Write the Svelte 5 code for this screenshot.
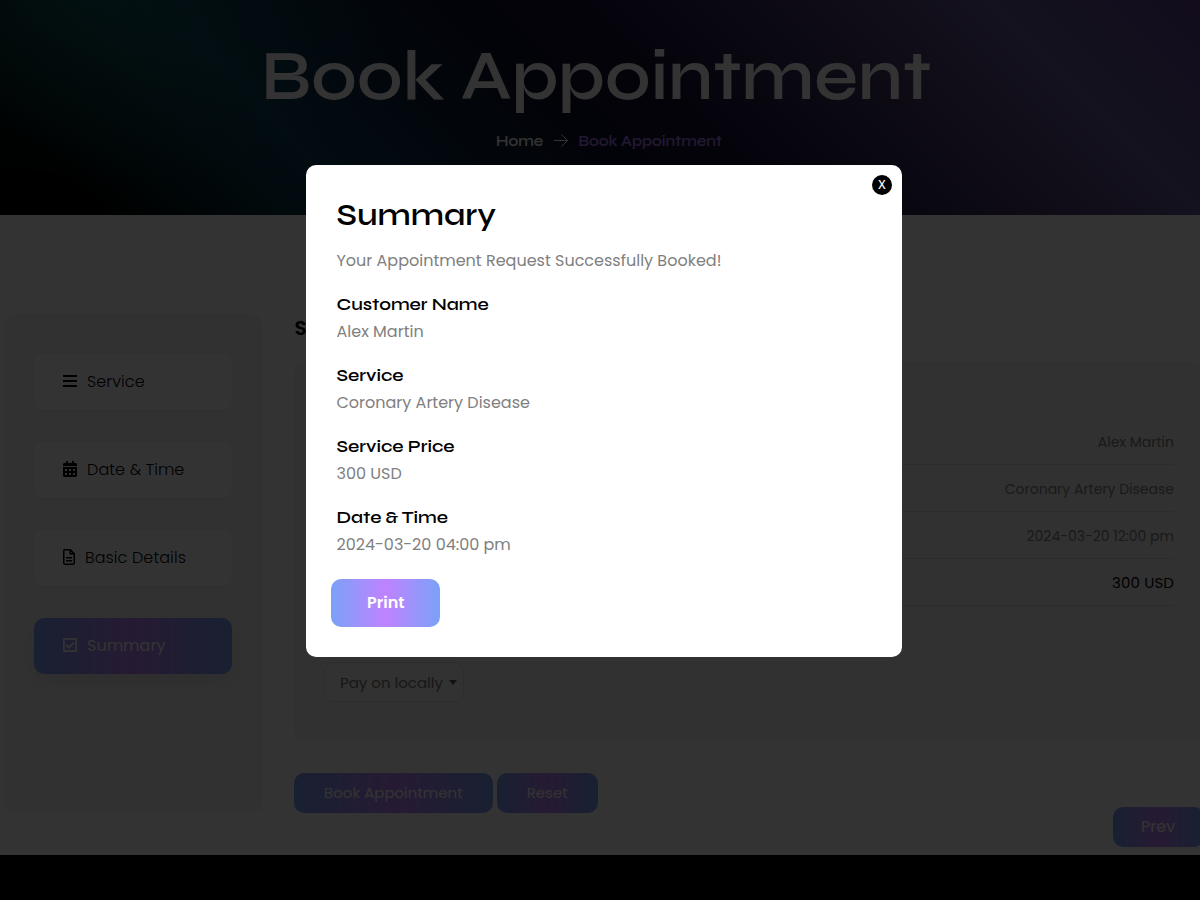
<script>
  const steps = [
    { label: 'Service', icon: 'bars' },
    { label: 'Date & Time', icon: 'calendar' },
    { label: 'Basic Details', icon: 'file' },
    { label: 'Summary', icon: 'check', active: true }
  ];
  const rows = [
    { value: 'Alex Martin' },
    { value: 'Coronary Artery Disease' },
    { value: '2024-03-20 12:00 pm' },
    { value: '300 USD', strong: true }
  ];
  const details = [
    { title: 'Customer Name', value: 'Alex Martin' },
    { title: 'Service', value: 'Coronary Artery Disease' },
    { title: 'Service Price', value: '300 USD' },
    { title: 'Date & Time', value: '2024-03-20 04:00 pm' }
  ];
</script>

<div class="page">
  <header class="hero">
    <h1>Book Appointment</h1>
    <nav class="crumbs">
      <span>Home</span>
      <svg width="14" height="14" viewBox="0 0 14 14" fill="none" stroke="currentColor" stroke-width="1"><path d="M0 6.500h13.300M7.500.500l6 6-6 6" /></svg>
      <span class="current">Book Appointment</span>
    </nav>
  </header>

  <main class="booking">
    <aside class="steps">
      {#each steps as s}
        <div class="step" class:active={s.active}>
          {#if s.icon === 'bars'}
            <svg width="14" height="16" viewBox="0 0 14 16" fill="currentColor"><path d="M0 2h14v2H0zM0 7h14v2H0zM0 12h14v2H0z" /></svg>
          {:else if s.icon === 'calendar'}
            <svg width="14" height="16" viewBox="0 0 448 512" fill="currentColor"><path fill-rule="evenodd" d="M0 464c0 26.500 21.500 48 48 48h352c26.500 0 48-21.500 48-48V192H0zM320 268c0-6.600 5.400-12 12-12h40c6.600 0 12 5.400 12 12v40c0 6.600-5.400 12-12 12h-40c-6.600 0-12-5.400-12-12zm0 128c0-6.600 5.400-12 12-12h40c6.600 0 12 5.400 12 12v40c0 6.600-5.400 12-12 12h-40c-6.600 0-12-5.400-12-12zM192 268c0-6.600 5.400-12 12-12h40c6.600 0 12 5.400 12 12v40c0 6.600-5.400 12-12 12h-40c-6.600 0-12-5.400-12-12zm0 128c0-6.600 5.400-12 12-12h40c6.600 0 12 5.400 12 12v40c0 6.600-5.400 12-12 12h-40c-6.600 0-12-5.400-12-12zM64 268c0-6.600 5.400-12 12-12h40c6.600 0 12 5.400 12 12v40c0 6.600-5.400 12-12 12H76c-6.600 0-12-5.400-12-12zm0 128c0-6.600 5.400-12 12-12h40c6.600 0 12 5.400 12 12v40c0 6.600-5.400 12-12 12H76c-6.600 0-12-5.400-12-12zM400 64h-48V16c0-8.800-7.200-16-16-16h-32c-8.800 0-16 7.200-16 16v48H160V16c0-8.800-7.200-16-16-16h-32c-8.800 0-16 7.200-16 16v48H48C21.500 64 0 85.500 0 112v48h448v-48c0-26.500-21.500-48-48-48z" /></svg>
          {:else if s.icon === 'file'}
            <svg width="12" height="16" viewBox="0 0 12 16" fill="none" stroke="currentColor" stroke-width="1.500"><path d="M2 .75h5.300l3.950 3.950V14q0 1.250-1.250 1.250H2Q.75 15.250.75 14V2Q.75.75 2 .75zM7.250.75v4h4M3 8.700h6M3 11.700h6" /></svg>
          {:else}
            <svg width="14" height="16" viewBox="0 0 14 16" fill="none" stroke="currentColor" stroke-width="1.700"><rect x=".85" y="1.850" width="12.300" height="12.300" rx=".7" /><path stroke-width="2" d="M3.200 7.900l2.700 2.700 5-5" /></svg>
          {/if}
          <span>{s.label}</span>
        </div>
      {/each}
    </aside>

    <section class="content">
      <h2>Summary</h2>
      <div class="card">
        {#each rows as r}
          <div class="row" class:strong={r.strong}>{r.value}</div>
        {/each}
        <div class="select">
          <span>Pay on locally</span>
          <svg width="8" height="5" viewBox="0 0 8 5" fill="currentColor"><path d="M0 0h8L4 5z" /></svg>
        </div>
      </div>
      <div class="actions">
        <button class="btn">Book Appointment</button>
        <button class="btn">Reset</button>
      </div>
      <button class="btn prev">Prev</button>
    </section>
  </main>
  <footer></footer>

  <div class="overlay">
    <div class="modal">
      <button class="close">X</button>
      <h3>Summary</h3>
      <p class="note">Your Appointment Request Successfully Booked!</p>
      {#each details as d}
        <div class="detail">
          <h4>{d.title}</h4>
          <p>{d.value}</p>
        </div>
      {/each}
      <button class="btn print">Print</button>
    </div>
  </div>
</div>

<style>
  :global(body) { margin: 0; overflow: hidden; }
  * { box-sizing: border-box; }
  h1, h2, h3, h4, p { margin: 0; }
  button { border: 0; font-family: inherit; }
  span, h1, h3, h4, p, button { white-space: nowrap; }
  .page {
    position: relative;
    height: 900px;
    width: 1200px;
    overflow: hidden;
    background: #fff;
    font-family: Poppins, Inter, sans-serif;
    font-size: 16px;
    color: #000;
  }

  .hero {
    height: 215px;
    padding-top: 36px;
    color: #fff;
    font-family: Syne, Inter, sans-serif;
    background:
      radial-gradient(ellipse 320px 190px at 90px 0, #14605a90, #14605a00),
      linear-gradient(45deg, #000 0, #000 7%, #03191e 13%, #08323f 20%, #0a3c55 26%, #0a2d4b 32%, #0a1e37 40%, #0c0f2a 48%, #190f37 57%, #322855 66%, #4b3c6e 74%, #5a4b87 80%, #645a96 85%, #5f4b91 93%, #5a3c91 100%);
  }
  h1 {
    height: 80px;
    line-height: 80px;
    padding-left: 261px;
    font-size: 70px;
    font-weight: 600;
  }
  .crumbs {
    display: flex;
    align-items: center;
    height: 20px;
    margin-top: 15px;
    padding-left: 496px;
    font-size: 15px;
    font-weight: 600;
    line-height: 20px;
  }
  .crumbs svg { margin: 0 10px 0 11px; }
  .current { color: #b27cf5; }

  .booking { display: flex; height: 640px; padding: 99px 0 0 4px; gap: 32px; }
  .steps {
    display: flex;
    flex-direction: column;
    gap: 32px;
    flex: none;
    width: 258px;
    height: 499px;
    padding: 40px 30px;
    border-radius: 10px;
    background: #f6f6f6;
  }
  .step {
    display: flex;
    align-items: center;
    gap: 10px;
    height: 56px;
    padding: 0 0 2px 29px;
    border-radius: 10px;
    background: #fff;
    box-shadow: 0 5px 10px #0000ff07;
    font-weight: 300;
    letter-spacing: 0.1px;
  }
  .step.active {
    color: #fff;
    font-weight: 400;
    letter-spacing: 0;
    background: linear-gradient(90deg, #7aa2f7, #bf83ff, #7aa2f7);
    box-shadow: 0 8px 20px #6a52a022;
  }
  .content { flex: none; width: 910px; }
  h2 { height: 48px; padding-left: 0.500px; line-height: 28px; font-size: 20px; font-weight: 600; }
  .card { height: 378px; padding: 56px 30px 0; border-radius: 10px; background: #f6f6f6; }
  .row {
    height: 47px;
    width: 850px;
    line-height: 48px;
    text-align: right;
    border-bottom: 1px solid #ddd;
    color: #808080;
    font-size: 14px;
  }
  .row.strong { color: #000; font-size: 15px; letter-spacing: 0.1px; }
  .select {
    display: flex;
    align-items: center;
    gap: 6px;
    width: 140px;
    height: 40px;
    margin-top: 56px;
    padding: 1px 0 0 15px;
    border: 1px solid #dedede;
    border-radius: 10px;
    font-size: 15px;
    color: #777;
    background: #f8f8f8;
  }
  .select svg { flex: none; color: #555; }
  .btn {
    display: block;
    height: 40px;
    padding: 0 30px 2px;
    border-radius: 10px;
    color: #fff;
    font-size: 15px;
    text-align: left;
    background: linear-gradient(90deg, #7aa2f7, #bf83ff, #7aa2f7);
  }
  .actions { display: flex; gap: 4px; margin-top: 33px; }
  .prev { width: 91px; padding: 0 0 2px 28px; margin: -6px 0 0 auto; font-size: 16px; }
  footer { height: 45px; background: #000; }

  .overlay {
    position: absolute;
    inset: 0;
    padding: 165px 0 0 306px;
    background: rgba(0, 0, 0, 0.8);
  }
  .modal {
    position: relative;
    width: 596px;
    height: 492px;
    padding: 30px 30.500px;
    border-radius: 10px;
    background: #fff;
  }
  h3, h4 { font-family: Syne, Inter, sans-serif; font-weight: 600; }
  h3 { height: 40px; line-height: 39px; font-size: 32px; }
  .note { height: 53px; margin-top: 11px; line-height: 29px; color: #808080; }
  .detail { height: 71px; margin-top: -9px; margin-bottom: 9px; color: #808080; }
  .detail h4 { height: 29px; line-height: 29px; font-size: 18px; color: #000; }
  .detail p { height: 26px; line-height: 26px; }
  .print { height: 48px; margin: -4px 0 0 -5.500px; padding: 0 36px 1px; font-size: 16px; font-weight: 600; }
  .close {
    position: absolute;
    top: 10px;
    right: 10px;
    width: 20px;
    height: 20px;
    padding: 0;
    border-radius: 50%;
    background: #000;
    color: #fff;
    font: 500 12px/20px "Noto Sans", sans-serif;
    text-align: center;
  }
</style>
